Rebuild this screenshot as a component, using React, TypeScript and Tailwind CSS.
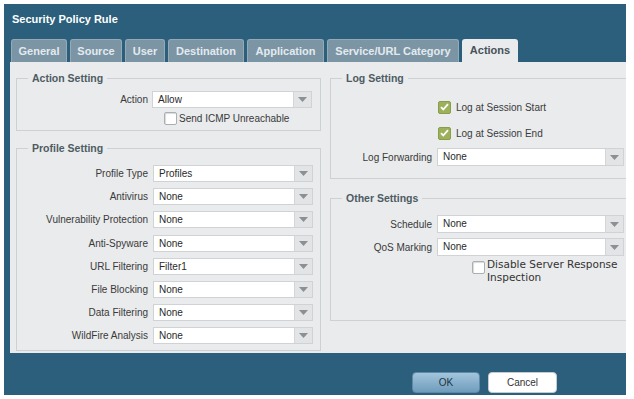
import React from "react";

const Arrow = () => (
  <svg width="9" height="5" viewBox="0 0 9 5">
    <path d="M0 0h9L4.5 5z" fill="#8a9094" />
  </svg>
);

function Select({ value, wide }: { value: string; wide?: boolean }) {
  return (
    <div
      className={
        wide
          ? "flex h-[18px] w-[187px] bg-white border border-[#cfd3d6]"
          : "flex h-[17px] w-[160px] bg-white border border-[#cfd3d6]"
      }
    >
      <div className="flex-1 pl-[5px] text-[10px] leading-[15px] text-[#2a2a2a]">{value}</div>
      <div className="w-[18px] bg-[#e2e4e5] border-l border-[#d3d6d8] flex items-center justify-center">
        <Arrow />
      </div>
    </div>
  );
}

function Checked() {
  return (
    <div className="w-[13px] h-[13px] rounded-[2px] bg-[#9db05a] border border-[#8a9d4c] flex items-center justify-center">
      <svg width="9" height="8" viewBox="0 0 9 8">
        <path d="M1 4.2l2.3 2.3L8 1.2" stroke="#fff" strokeWidth="1.8" fill="none" />
      </svg>
    </div>
  );
}

function Unchecked() {
  return (
    <div className="w-[13px] h-[13px] rounded-[2px] bg-white border border-[#a9afb3] shadow-[inset_1px_1px_1px_rgba(0,0,0,0.15)]" />
  );
}

function Row({ label, value }: { label: string; value: string }) {
  return (
    <div className="flex items-center gap-[5px]">
      <div className="w-[131px] text-right text-[10px] text-[#3a3a3a]">{label}</div>
      <Select value={value} />
    </div>
  );
}

function RRow({ label, value }: { label: string; value: string }) {
  return (
    <div className="flex items-center gap-[5px]">
      <div className="w-[101px] text-right text-[10px] text-[#3a3a3a]">{label}</div>
      <Select value={value} wide />
    </div>
  );
}

const legendCls = "ml-[11px] px-[4px] text-[10.5px] font-bold leading-[12px] text-[#4e5b63]";

const tabs: { name: string; w: string }[] = [
  { name: "General", w: "w-[56px]" },
  { name: "Source", w: "w-[52px]" },
  { name: "User", w: "w-[40px]" },
  { name: "Destination", w: "w-[76px]" },
  { name: "Application", w: "w-[77px]" },
  { name: "Service/URL Category", w: "w-[132px]" },
];

export default function App() {
  return (
    <div className="w-[634px] h-[399px] bg-white pt-[4px] pl-[4px] overflow-hidden font-['Liberation_Sans',Arial,sans-serif]">
      <div className="w-[622px] h-[391px] bg-[#2c5f7c] flex flex-col">
        <div className="h-[35px] pl-[8px] pt-[7px] text-[11px] font-bold text-white">Security Policy Rule</div>
        <div className="h-[23px] flex items-end pl-[7px] gap-[3px]">
          {tabs.map((t) => (
            <div
              key={t.name}
              className={
                t.w +
                " h-[23px] rounded-t-[3px] bg-[#7b95a5] border border-b-0 border-[#94aab7] flex items-center justify-center text-[11px] font-bold text-[#e3eaee]"
              }
            >
              {t.name}
            </div>
          ))}
          <div className="w-[56px] h-[23px] rounded-t-[3px] bg-[#e9ebec] flex items-center justify-center text-[11px] font-bold text-[#46525a]">
            Actions
          </div>
        </div>
        <div className="ml-[6px] w-[616px] h-[291px] bg-[#e9ebec] flex pt-[10px] pl-[6px] gap-[9px]">
          {/* Left column */}
          <div className="w-[305px] flex flex-col">
            <fieldset className="h-[59px] border border-[#cdd1d4]">
              <legend className={legendCls}>Action Setting</legend>
              <div className="pt-[7px] flex items-center gap-[4px]">
                <div className="w-[131px] text-right text-[10px] text-[#3a3a3a]">Action</div>
                <Select value="Allow" />
              </div>
              <div className="mt-[3px] pl-[147px] flex items-center gap-[2px]">
                <Unchecked />
                <span className="text-[10px] text-[#3a3a3a]">Send ICMP Unreachable</span>
              </div>
            </fieldset>
            <fieldset className="mt-[11px] h-[209px] border border-[#cdd1d4]">
              <legend className={legendCls}>Profile Setting</legend>
              <div className="pt-[11px] flex flex-col gap-[6.2px]">
                <Row label="Profile Type" value="Profiles" />
                <Row label="Antivirus" value="None" />
                <Row label="Vulnerability Protection" value="None" />
                <Row label="Anti-Spyware" value="None" />
                <Row label="URL Filtering" value="Filter1" />
                <Row label="File Blocking" value="None" />
                <Row label="Data Filtering" value="None" />
                <Row label="WildFire Analysis" value="None" />
              </div>
            </fieldset>
          </div>
          {/* Right column */}
          <div className="flex-1 flex flex-col">
            <fieldset className="h-[107px] border border-r-0 border-[#cdd1d4]">
              <legend className={legendCls}>Log Setting</legend>
              <div className="mt-[15px] h-[16px] pl-[107px] flex items-center gap-[5px]">
                <Checked />
                <span className="text-[10px] text-[#3a3a3a]">Log at Session Start</span>
              </div>
              <div className="mt-[10px] h-[16px] pl-[107px] flex items-center gap-[5px]">
                <Checked />
                <span className="text-[10px] text-[#3a3a3a]">Log at Session End</span>
              </div>
              <div className="mt-[7px]">
                <RRow label="Log Forwarding" value="None" />
              </div>
            </fieldset>
            <fieldset className="mt-[13px] h-[129px] border border-r-0 border-[#cdd1d4]">
              <legend className={legendCls}>Other Settings</legend>
              <div className="pt-[11px] flex flex-col gap-[5px]">
                <RRow label="Schedule" value="None" />
                <RRow label="QoS Marking" value="None" />
              </div>
              <div className="mt-[2px] pl-[141px] flex items-start gap-[2px]">
                <div className="mt-[3px]">
                  <Unchecked />
                </div>
                <span className="text-[10.5px] leading-[13px] text-[#333] font-['DejaVu_Sans',sans-serif]">
                  Disable Server Response
                  <br />
                  Inspection
                </span>
              </div>
            </fieldset>
          </div>
        </div>
        <div className="pt-[19px] pl-[408px] flex gap-[8px]">
          <div className="w-[68px] h-[21px] rounded-[4px] border border-[#5d8aa9] bg-gradient-to-b from-[#a3c5dc] to-[#6f9cbc] flex items-center justify-center text-[10px] text-[#22343f]">
            OK
          </div>
          <div className="w-[69px] h-[21px] rounded-[4px] border border-[#c3cbd1] bg-white flex items-center justify-center text-[10px] text-[#333]">
            Cancel
          </div>
        </div>
      </div>
    </div>
  );
}
